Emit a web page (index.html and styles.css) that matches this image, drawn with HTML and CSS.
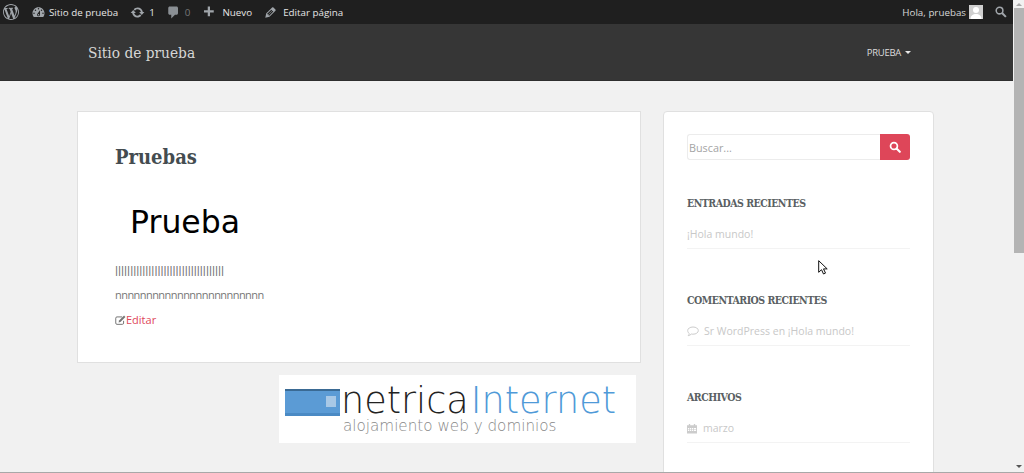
FILE: index.html
```html
<!DOCTYPE html>
<html lang="es">
<head>
<meta charset="utf-8">
<title>Sitio de prueba</title>
<link rel="stylesheet" href="styles.css">
</head>
<body>
<div class="window">
  <div class="page">
    <nav class="adminbar">
      <div class="ab-group">
        <svg class="ab-wp" viewBox="0 0 20 20"><path d="M20 10c0-5.51-4.49-10-10-10C4.48 0 0 4.49 0 10c0 5.52 4.48 10 10 10 5.51 0 10-4.48 10-10zM7.78 15.37L4.37 6.22c.55-.02 1.17-.08 1.17-.08.5-.06.44-1.13-.06-1.11 0 0-1.45.11-2.37.11-.18 0-.37 0-.58-.01C4.12 2.69 6.87 1.11 10 1.11c2.33 0 4.45.87 6.05 2.34-.68-.11-1.65.39-1.65 1.58 0 .74.45 1.36.9 2.1.35.61.55 1.36.55 2.46 0 1.49-1.4 5-1.4 5l-3.03-8.37c.54-.02.82-.17.82-.17.5-.05.44-1.25-.06-1.22 0 0-1.44.12-2.38.12-.87 0-2.33-.12-2.33-.12-.5-.03-.56 1.2-.06 1.22l.92.08 1.26 3.41zM17.41 10c.24-.64.74-1.87.43-4.25.7 1.29 1.05 2.71 1.05 4.25 0 3.29-1.73 6.24-4.4 7.78.97-2.59 1.94-5.2 2.92-7.78zM6.1 18.09C3.12 16.65 1.11 13.53 1.11 10c0-1.3.23-2.48.72-3.59C3.25 10.3 4.67 14.2 6.1 18.09zm4.03-6.63l2.58 6.98c-.86.29-1.76.45-2.71.45-.79 0-1.57-.11-2.29-.33.81-2.38 1.62-4.74 2.42-7.1z"/></svg>
        <a class="ab-item ab-site"><svg class="ab-icon" viewBox="0 0 20 20"><path d="M3.76 16h12.48c1.1-1.37 1.76-3.11 1.76-5 0-4.42-3.58-8-8-8s-8 3.58-8 8c0 1.89.66 3.63 1.76 5zM10 4c.55 0 1 .45 1 1s-.45 1-1 1-1-.45-1-1 .45-1 1-1zM6 6c.55 0 1 .45 1 1s-.45 1-1 1-1-.45-1-1 .45-1 1-1zm8 0c.55 0 1 .45 1 1s-.45 1-1 1-1-.45-1-1 .45-1 1-1zm-5.37 5.55L12 7v6c0 1.1-.9 2-2 2s-2-.9-2-2c0-.57.24-1.08.63-1.45zM4 10c.55 0 1 .45 1 1s-.45 1-1 1-1-.45-1-1 .45-1 1-1zm12 0c.55 0 1 .45 1 1s-.45 1-1 1-1-.45-1-1 .45-1 1-1zm-5 3c0-.55-.45-1-1-1s-1 .45-1 1 .45 1 1 1 1-.45 1-1z"/></svg>Sitio de prueba</a>
        <a class="ab-item ab-updates"><svg class="ab-icon" viewBox="0 0 20 20"><path d="M10.2 3.28c3.53 0 6.43 2.61 6.92 6h2.08l-3.5 4-3.5-4h2.32c-.45-1.97-2.21-3.45-4.32-3.45-1.45 0-2.73.71-3.54 1.78L4.95 5.66C6.23 4.2 8.11 3.28 10.2 3.28zm-.4 13.44c-3.52 0-6.43-2.61-6.92-6H.8l3.5-4c1.17 1.33 2.33 2.67 3.5 4H5.48c.45 1.97 2.21 3.45 4.32 3.45 1.45 0 2.73-.71 3.54-1.78l1.71 1.95c-1.28 1.46-3.15 2.38-5.25 2.38z"/></svg>1</a>
        <a class="ab-item ab-comments"><svg class="ab-icon ab-dim" viewBox="0 0 20 20"><path d="M5 2h9c1.1 0 2 .9 2 2v7c0 1.1-.9 2-2 2h-2l-5 5v-5H5c-1.1 0-2-.9-2-2V4c0-1.1.9-2 2-2z"/></svg><span class="ab-zero">0</span></a>
        <a class="ab-item ab-new"><svg class="ab-icon" viewBox="0 0 20 20"><path d="M17 7v3h-5v5H9v-5H4V7h5V2h3v5h5z"/></svg>Nuevo</a>
        <a class="ab-item ab-edit"><svg class="ab-icon" viewBox="0 0 20 20"><path d="M13.89 3.39l2.71 2.72c.46.46.42 1.24.03 1.64l-8.01 8.02-5.56 1.16 1.16-5.58s7.6-7.63 7.99-8.03c.39-.39 1.22-.39 1.68.07zm-2.73 2.79l-5.59 5.61 1.11 1.11 5.54-5.65zm-2.97 8.23l5.58-5.6-1.07-1.08-5.59 5.6z"/></svg>Editar página</a>
      </div>
      <div class="ab-group">
        <a class="ab-item ab-user">Hola, pruebas<span class="avatar"><svg viewBox="0 0 14 14"><rect width="14" height="14" fill="#cfcfcf"/><circle cx="7" cy="5" r="3" fill="#fff"/><path d="M1.5 14c0-3.5 2.5-5 5.5-5s5.500 1.500 5.500 5z" fill="#fff"/></svg></span></a>
        <svg class="ab-search" viewBox="0 0 14 14"><circle cx="5.300" cy="5.300" r="3.900" fill="none" stroke="#a0a5aa" stroke-width="1.800"/><path d="M8.200 8.200l4.500 4.500" stroke="#a0a5aa" stroke-width="2.400"/></svg>
      </div>
    </nav>
    <header class="masthead">
      <a class="brand">Sitio de prueba</a>
      <a class="menu">PRUEBA<span class="caret"></span></a>
    </header>
    <div class="content">
      <main class="primary">
        <article class="card post">
          <h1 class="post-title">Pruebas</h1>
          <p class="big">Prueba</p>
          <p class="line line-l">llllllllllllllllllllllllllllllllllll</p>
          <p class="line line-n">nnnnnnnnnnnnnnnnnnnnnnnn</p>
          <a class="edit-link"><svg class="edit-icon" viewBox="0 0 13 12"><path d="M8.500 2.300H2.300A1.500 1.500 0 0 0 .8 3.800v5.900a1.500 1.500 0 0 0 1.500 1.500h6.400a1.500 1.500 0 0 0 1.500-1.500V7" fill="none" stroke="#777" stroke-width="1.200"/><path d="M10.800 .7l1.600 1.600-6 6-2.200.6.600-2.200z" fill="#777"/></svg>Editar</a>
        </article>
        <div class="banner">
          <div class="banner-row">
            <div class="banner-mark"><span class="banner-dot"></span></div>
            <div class="banner-name"><span class="b-dark">netrica</span><span class="b-blue">Internet</span></div>
          </div>
          <div class="banner-sub">alojamiento web y dominios</div>
        </div>
      </main>
      <aside class="card side">
        <form class="search">
          <input class="search-input" type="text" placeholder="Buscar...">
          <button class="search-btn" type="button"><svg viewBox="0 0 14 14"><circle cx="5.800" cy="5.800" r="4" fill="none" stroke="#fff" stroke-width="2"/><path d="M8.800 8.800l3.800 3.800" stroke="#fff" stroke-width="2.400" stroke-linecap="round"/></svg></button>
        </form>
        <section class="widget w-recent">
          <h3 class="widget-title">ENTRADAS RECIENTES</h3>
          <div class="widget-row">¡Hola mundo!</div>
        </section>
        <section class="widget w-comments">
          <h3 class="widget-title">COMENTARIOS RECIENTES</h3>
          <div class="widget-row"><svg class="row-icon row-icon-c" viewBox="0 0 12 11"><path d="M6 1c3 0 5.300 1.500 5.300 3.600S9 8.200 6 8.200c-.6 0-1.100 0-1.600-.2C3.500 9 2.300 9.500 1.200 9.700c.6-.7 1-1.400 1-2.300C1.200 6.700.7 5.700.7 4.600.7 2.500 3 1 6 1z" fill="none" stroke="#ccc" stroke-width="1"/></svg>Sr WordPress en ¡Hola mundo!</div>
        </section>
        <section class="widget w-archive">
          <h3 class="widget-title">ARCHIVOS</h3>
          <div class="widget-row"><svg class="row-icon row-icon-a" viewBox="0 0 11 11"><path d="M0 2h2V.5h1.500V2h4V.5H9V2h2v9H0zm1 3v1.200h1.400V5zm2.200 0v1.200h1.400V5zm2.200 0v1.200h1.400V5zm2.200 0v1.200H10V5zM1 7v1.200h1.400V7zm2.200 0v1.200h1.400V7zm2.200 0v1.200h1.400V7zm2.200 0v1.200H10V7z" fill="#ccc" fill-rule="evenodd"/></svg>marzo</div>
        </section>
      </aside>
    </div>
  </div>
  <div class="scrollbar">
    <span class="sb-arrow sb-up"></span>
    <span class="sb-thumb"></span>
    <span class="sb-arrow sb-down"></span>
  </div>
</div>
<svg class="cursor" viewBox="0 0 11 15"><path d="M.7.7v11.600l2.800-2.600 2 4.300 2-.9-2-4.200h3.700z" fill="#fff" stroke="#111" stroke-width="1"/></svg>
</body>
</html>
```
FILE: styles.css
```css
* { box-sizing: border-box; }
html, body { margin: 0; height: 473px; overflow: hidden; }
body { font-family: "Open Sans", sans-serif; font-size: 13px; background: #f1f1f1; border-bottom: 1px solid #a8a8a8; }
p, h1, h3 { margin: 0; }

.window { display: flex; height: 472px; }
.page { flex: 1; min-width: 0; display: flex; flex-direction: column; overflow: hidden; }

.adminbar { height: 24px; flex: none; background: #1f1f1f; display: flex; justify-content: space-between; align-items: center; color: #e6e6e6; font-size: 9.800px; }
.ab-group { display: flex; align-items: center; }
.ab-wp { width: 16px; height: 16px; fill: #a0a5aa; margin-left: 3px; }
.ab-item { display: flex; align-items: center; }
.ab-icon { width: 15px; height: 15px; fill: #a0a5aa; }
.ab-site { margin-left: 12px; }
.ab-site .ab-icon { margin-right: 3px; }
.ab-updates { margin-left: 12px; }
.ab-updates .ab-icon { margin-right: 4px; }
.ab-comments { margin-left: 11px; }
.ab-comments .ab-icon { margin-right: 4px; }
.ab-dim { fill: #8a8f94; }
.ab-zero { color: #777; }
.ab-new { margin-left: 11px; }
.ab-new .ab-icon { margin-right: 6px; }
.ab-edit { margin-left: 11px; }
.ab-edit .ab-icon { margin-right: 5px; }
.ab-user { color: #d8d8d8; }
.avatar { width: 14px; height: 14px; margin-left: 3px; display: block; }
.avatar svg { display: block; }
.ab-search { width: 12px; height: 12px; margin: 0 6px 0 12px; }

.masthead { height: 57px; flex: none; background: #363636; display: flex; justify-content: space-between; align-items: center; padding: 2px 102px 0 88px; border-bottom: 1px solid #2e2e2e; }
.brand { font-family: "Roboto Slab", "DejaVu Serif Condensed", "DejaVu Serif", serif; font-size: 15.300px; color: #d6d6d6; }
.menu { font-size: 9.500px; letter-spacing: -.3px; color: #dcdcdc; display: flex; align-items: center; margin-top: -2px; }
.caret { width: 0; height: 0; margin-left: 4px; border-left: 3px solid transparent; border-right: 3px solid transparent; border-top: 3px solid #e8e8e8; }

.content { display: grid; grid-template-columns: 564px 271px; column-gap: 22px; padding: 30px 0 0 77px; flex: 1; min-height: 0; }
.card { background: #fff; border: 1px solid #e0e0e0; }
.primary { display: flex; flex-direction: column; align-items: stretch; }

.post { height: 252px; padding: 31px 37px 0; }
.post-title { font-family: "Roboto Slab", "DejaVu Serif Condensed", "DejaVu Serif", serif; font-weight: 700; font-size: 20px; line-height: 28px; color: #444c50; }
.big { font-family: "DejaVu Sans", sans-serif; font-size: 31.500px; line-height: 40px; color: #000; margin: 31px 0 0 15px; }
.line { font-size: 12px; line-height: 17px; color: #777; }
.line-l { margin-top: 21px; }
.line-n { margin-top: 6px; font-size: 11px; letter-spacing: -.55px; }
.edit-link { display: flex; align-items: center; margin-top: 9px; font-size: 11px; line-height: 16px; color: #e0475a; }
.edit-icon { width: 11px; height: 10px; }

.banner { margin: 12px 5px 0 auto; width: 357px; height: 68px; background: #fff; padding: 9px 0 0 6px; }
.banner-row { display: flex; align-items: center; height: 33px; }
.banner-mark { width: 55px; height: 27px; margin-top: 3px; flex: none; background: #5b9bd5; border-top: 2px solid #3a6a94; border-bottom: 3px solid #4a8ac4; display: flex; align-items: center; justify-content: flex-end; padding-right: 4px; }
.banner-dot { width: 10px; height: 11px; background: #a8c8e6; display: block; }
.banner-name { font-family: "DejaVu Sans Light", "DejaVu Sans", sans-serif; font-weight: 200; font-size: 36.600px; line-height: 33px; margin-left: 1px; white-space: nowrap; }
.b-dark { color: #222; }
.b-blue { color: #4f9ad8; margin-left: 2px; }
.banner-sub { font-family: "DejaVu Sans Light", "DejaVu Sans", sans-serif; font-weight: 200; font-size: 15.200px; line-height: 18px; color: #888; margin: 0 0 0 58px; }

.side { border-radius: 4px 4px 0 0; padding: 22px 23px 0; height: 400px; }
.search { display: flex; height: 26px; }
.search-input { flex: 1; min-width: 0; border: 1px solid #ececec; border-right: 0; border-radius: 3px 0 0 3px; padding: 0 1px; font: 10.800px "Open Sans", sans-serif; color: #999; background: #fff; outline: 0; }
.search-input::placeholder { color: #a4a4a4; opacity: 1; }
.search-btn { width: 30px; padding: 0; border: 0; background: #de4659; border-radius: 0 3px 3px 0; display: flex; align-items: center; justify-content: center; }
.search-btn svg { width: 12px; height: 12px; display: block; }

.widget-title { font-family: "Roboto Slab", "DejaVu Serif Condensed", "DejaVu Serif", serif; font-size: 10.500px; letter-spacing: -.5px; font-weight: 700; line-height: 14px; color: #5a5f63; }
.widget-row { display: flex; align-items: center; height: 29px; margin-top: 10px; font-size: 10.500px; color: #c8c8c8; border-bottom: 1px solid #f3f3f3; }
.w-recent { margin-top: 36px; }
.w-comments { margin-top: 44px; }
.w-archive { margin-top: 44px; }
.row-icon { height: 11px; flex: none; }
.row-icon-c { width: 12px; margin-right: 5px; }
.row-icon-a { width: 10px; margin-right: 6px; }

.scrollbar { width: 11px; flex: none; display: flex; flex-direction: column; align-items: center; background: #f1f1f1; }
.sb-arrow { width: 0; height: 0; border-left: 3px solid transparent; border-right: 3px solid transparent; flex: none; }
.sb-up { border-bottom: 3px solid #a8a8a8; margin-top: 3px; }
.sb-thumb { width: 10px; height: 245px; margin-top: 2px; background: #b4b4b4; flex: none; }
.sb-down { border-top: 3px solid #555; margin-top: auto; margin-bottom: 4px; }

.cursor { position: absolute; left: 818px; top: 260px; width: 11px; height: 15px; }
```
